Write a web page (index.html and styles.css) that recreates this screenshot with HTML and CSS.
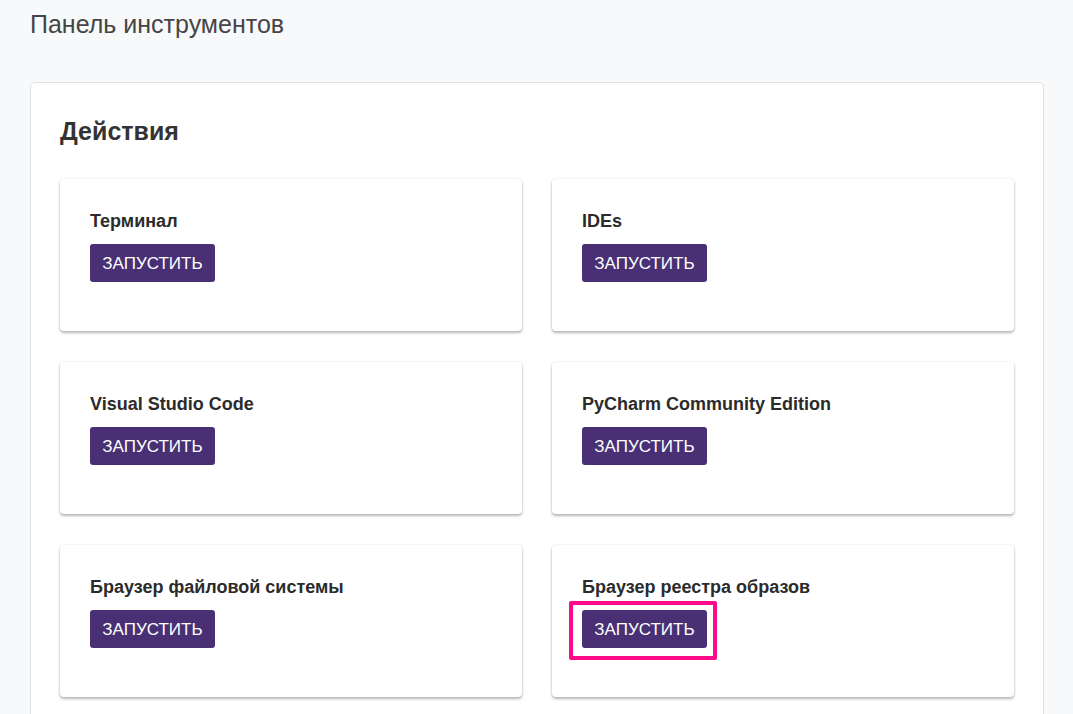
FILE: index.html
```html
<!DOCTYPE html>
<html lang="ru">
<head>
<meta charset="utf-8">
<title>Панель инструментов</title>
<link rel="stylesheet" href="styles.css">
</head>
<body>
<div class="page">
  <h1 class="page-title">Панель инструментов</h1>
  <section class="panel">
    <h2 class="panel-title">Действия</h2>
    <div class="grid">
      <div class="card">
        <div class="card-title">Терминал</div>
        <div class="actions"><button class="btn">ЗАПУСТИТЬ</button></div>
      </div>
      <div class="card">
        <div class="card-title">IDEs</div>
        <div class="actions"><button class="btn">ЗАПУСТИТЬ</button></div>
      </div>
      <div class="card">
        <div class="card-title">Visual Studio Code</div>
        <div class="actions"><button class="btn">ЗАПУСТИТЬ</button></div>
      </div>
      <div class="card">
        <div class="card-title">PyCharm Community Edition</div>
        <div class="actions"><button class="btn">ЗАПУСТИТЬ</button></div>
      </div>
      <div class="card">
        <div class="card-title">Браузер файловой системы</div>
        <div class="actions"><button class="btn">ЗАПУСТИТЬ</button></div>
      </div>
      <div class="card">
        <div class="card-title">Браузер реестра образов</div>
        <div class="actions"><span class="highlight"><button class="btn">ЗАПУСТИТЬ</button></span></div>
      </div>
    </div>
  </section>
</div>
</body>
</html>
```
FILE: styles.css
```css
* { box-sizing: border-box; }
html, body {
  margin: 0;
  padding: 0;
  background: #f8f9fb;
  font-family: "Liberation Sans", Arial, sans-serif;
  height: 714px;
  overflow: hidden;
}
.page {
  padding: 9px 29px 0 30px;
}
.page-title {
  margin: 0;
  font-size: 25px;
  font-weight: 400;
  color: #454545;
  line-height: 30px;
}
.panel {
  margin-top: 43px;
  background: #fff;
  border: 1px solid #e0e0e0;
  border-radius: 5px;
  padding: 33px 29px 40px 29px;
}
.panel-title {
  margin: 0 0 33px 0;
  font-size: 25px;
  font-weight: 700;
  color: #333;
  line-height: 30px;
}
.grid {
  display: grid;
  grid-template-columns: 462px 462px;
  column-gap: 30px;
  row-gap: 31px;
}
.card {
  background: #fff;
  border-radius: 4px;
  height: 152px;
  padding: 30px 30px 0 30px;
  box-shadow: 0 2px 3px rgba(0,0,0,0.28), 0 0 2px rgba(0,0,0,0.12);
}
.card-title {
  font-size: 18px;
  font-weight: 700;
  color: #2b2b2b;
  line-height: 24px;
}
.actions {
  margin-top: 11px;
  display: flex;
}
.btn {
  background: #492f74;
  color: #fff;
  border: none;
  border-radius: 3px;
  font-family: "Liberation Sans", Arial, sans-serif;
  font-size: 17px;
  height: 38px;
  width: 125px;
  padding: 2px 0 0 0;
  letter-spacing: 0;
  cursor: pointer;
}
.highlight {
  position: relative;
  display: inline-flex;
}
.highlight::after {
  content: "";
  position: absolute;
  left: -13px;
  top: -9px;
  right: -10px;
  bottom: -12px;
  border: 4px solid #ff0a88;
  border-radius: 2px;
  pointer-events: none;
}
```
